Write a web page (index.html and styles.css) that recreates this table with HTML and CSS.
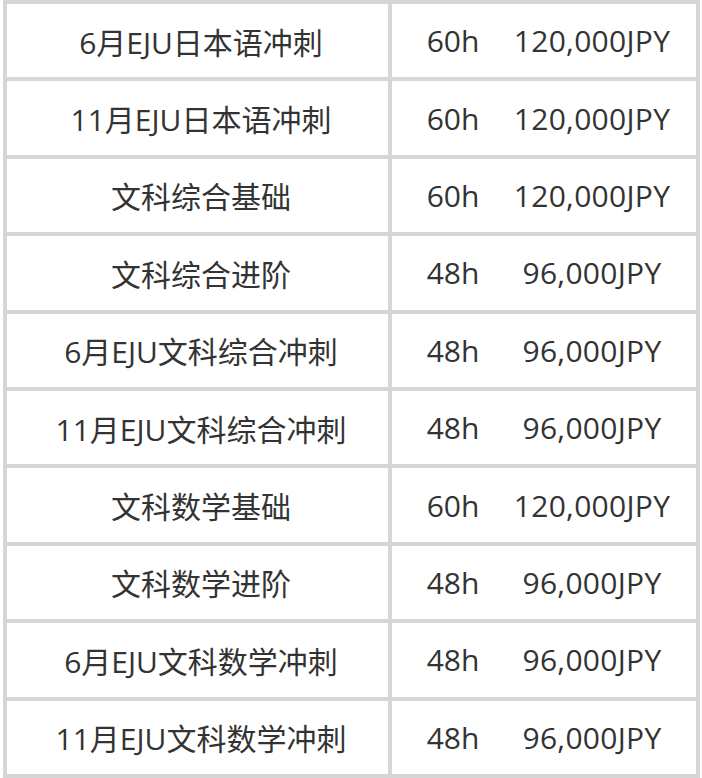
FILE: index.html
```html
<!DOCTYPE html>
<html lang="zh">
<head>
<meta charset="utf-8">
<link rel="stylesheet" href="styles.css">
</head>
<body>
<div class="price-table">
  <div class="name">6月EJU日本语冲刺</div><div class="info"><span class="hours">60h</span><span class="price">120,000JPY</span></div>
  <div class="name">11月EJU日本语冲刺</div><div class="info"><span class="hours">60h</span><span class="price">120,000JPY</span></div>
  <div class="name">文科综合基础</div><div class="info"><span class="hours">60h</span><span class="price">120,000JPY</span></div>
  <div class="name">文科综合进阶</div><div class="info"><span class="hours">48h</span><span class="price">96,000JPY</span></div>
  <div class="name">6月EJU文科综合冲刺</div><div class="info"><span class="hours">48h</span><span class="price">96,000JPY</span></div>
  <div class="name">11月EJU文科综合冲刺</div><div class="info"><span class="hours">48h</span><span class="price">96,000JPY</span></div>
  <div class="name">文科数学基础</div><div class="info"><span class="hours">60h</span><span class="price">120,000JPY</span></div>
  <div class="name">文科数学进阶</div><div class="info"><span class="hours">48h</span><span class="price">96,000JPY</span></div>
  <div class="name">6月EJU文科数学冲刺</div><div class="info"><span class="hours">48h</span><span class="price">96,000JPY</span></div>
  <div class="name">11月EJU文科数学冲刺</div><div class="info"><span class="hours">48h</span><span class="price">96,000JPY</span></div>
</div>
</body>
</html>
```
FILE: styles.css
```css
html, body {
  margin: 0;
  padding: 0;
  background: #ffffff;
}
body {
  font-family: "Open Sans", "Noto Sans CJK SC", sans-serif;
  color: #333333;
  font-size: 30px;
}
.price-table {
  margin-left: 3px;
  width: 697px;
  height: 778px;
  box-sizing: border-box;
  display: grid;
  grid-template-columns: 381px 304px;
  grid-template-rows: repeat(10, 1fr);
  gap: 4px;
  padding: 4px;
  background: #d6d6d6;
}
.name, .info {
  background: #ffffff;
  display: flex;
  align-items: center;
}
.name {
  justify-content: center;
  padding-left: 7px;
}
.info {
  display: grid;
  grid-template-columns: 122px 156px;
  align-items: center;
  justify-items: center;
}
.price {
  letter-spacing: 0.3px;
}
```
